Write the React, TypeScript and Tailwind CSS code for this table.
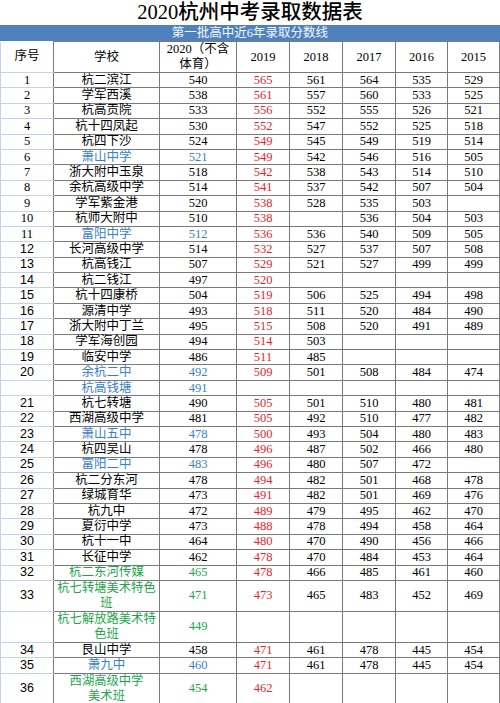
import React from "react";

type Tone = "black" | "blue" | "green";

interface Row {
    seq: string;
    name: string[];
    tone: Tone;
    scores: string[]; // 2020, 2019, 2018, 2017, 2016, 2015
}

const r = (
    seq: string,
    name: string | string[],
    tone: Tone,
    ...scores: string[]
): Row => ({
    seq,
    name: Array.isArray(name) ? name : [name],
    tone,
    scores: [...scores, "", "", "", "", "", ""].slice(0, 6),
});

const ROWS: Row[] = [
    r("1", "杭二滨江", "black", "540", "565", "561", "564", "535", "529"),
    r("2", "学军西溪", "black", "538", "561", "557", "560", "533", "525"),
    r("3", "杭高贡院", "black", "533", "556", "552", "555", "526", "521"),
    r("4", "杭十四凤起", "black", "530", "552", "547", "552", "525", "518"),
    r("5", "杭四下沙", "black", "524", "549", "545", "549", "519", "514"),
    r("6", "萧山中学", "blue", "521", "549", "542", "546", "516", "505"),
    r("7", "浙大附中玉泉", "black", "518", "542", "538", "543", "514", "510"),
    r("8", "余杭高级中学", "black", "514", "541", "537", "542", "507", "504"),
    r("9", "学军紫金港", "black", "520", "538", "528", "535", "503", ""),
    r("10", "杭师大附中", "black", "510", "538", "", "536", "504", "503"),
    r("11", "富阳中学", "blue", "512", "536", "536", "540", "509", "505"),
    r("12", "长河高级中学", "black", "514", "532", "527", "537", "507", "508"),
    r("13", "杭高钱江", "black", "507", "529", "521", "527", "499", "499"),
    r("14", "杭二钱江", "black", "497", "520"),
    r("15", "杭十四康桥", "black", "504", "519", "506", "525", "494", "498"),
    r("16", "源清中学", "black", "493", "518", "511", "520", "484", "490"),
    r("17", "浙大附中丁兰", "black", "495", "515", "508", "520", "491", "489"),
    r("18", "学军海创园", "black", "494", "514", "503"),
    r("19", "临安中学", "black", "486", "511", "485"),
    r("20", "余杭二中", "blue", "492", "509", "501", "508", "484", "474"),
    r("", "杭高钱塘", "blue", "491"),
    r("21", "杭七转塘", "black", "490", "505", "501", "510", "480", "481"),
    r("22", "西湖高级中学", "black", "481", "505", "492", "510", "477", "482"),
    r("23", "萧山五中", "blue", "478", "500", "493", "504", "480", "483"),
    r("24", "杭四吴山", "black", "478", "496", "487", "502", "466", "480"),
    r("25", "富阳二中", "blue", "483", "496", "480", "507", "472", ""),
    r("26", "杭二分东河", "black", "478", "494", "482", "501", "468", "478"),
    r("27", "绿城育华", "black", "473", "491", "482", "501", "469", "476"),
    r("28", "杭九中", "black", "472", "489", "479", "495", "462", "470"),
    r("29", "夏衍中学", "black", "473", "488", "478", "494", "458", "464"),
    r("30", "杭十一中", "black", "464", "480", "470", "490", "456", "466"),
    r("31", "长征中学", "black", "462", "478", "470", "484", "453", "464"),
    r("32", "杭二东河传媒", "green", "465", "478", "466", "485", "461", "460"),
    r("33", ["杭七转塘美术特色", "班"], "green", "471", "473", "465", "483", "452", "469"),
    r("", ["杭七解放路美术特", "色班"], "green", "449"),
    r("34", "艮山中学", "black", "458", "471", "461", "478", "445", "454"),
    r("35", "萧九中", "blue", "460", "471", "461", "478", "445", "454"),
    r("36", ["西湖高级中学", "美术班"], "green", "454", "462"),
];

const TONE: Record<Tone, string> = {
    black: "text-black",
    blue: "text-[#3b80c6]",
    green: "text-[#1ea54c]",
};

const serif = "font-['Liberation_Serif','Noto_Sans_CJK_SC',serif]";
const cell = "border border-[#7a7a7a] p-0 text-center align-middle";
const seqCell = "border border-[#c3d4ea] border-r-[#7a7a7a] p-0 text-center align-middle";

export default function App() {
    return (
        <div className={`w-[500px] h-[703px] bg-white overflow-hidden ${serif}`}>
            <div className="h-[25px] flex items-center justify-center text-[20.5px] font-medium leading-none text-black">
                2020杭州中考录取数据表
            </div>
            <div className="h-[16px] bg-[#4f81bd] flex items-center justify-center text-[12.5px] leading-none text-[#f4f7fb]">
                第一批高中近6年录取分数线
            </div>
            <table className="w-[499px] table-fixed border-collapse text-[12.5px] leading-[13px] text-black">
                <colgroup>
                    <col className="w-[53px]" />
                    <col className="w-[106px]" />
                    <col className="w-[77px]" />
                    <col className="w-[53px]" />
                    <col className="w-[53px]" />
                    <col className="w-[53px]" />
                    <col className="w-[52px]" />
                    <col className="w-[52px]" />
                </colgroup>
                <thead>
                    <tr className="h-[30px]">
                        <th className={`${seqCell} border-t-0 font-normal`}>序号</th>
                        <th className={`${cell} font-normal`}>学校</th>
                        <th className={`${cell} font-normal leading-[15px]`}>
                            2020（不含
                            <br />
                            体育）
                        </th>
                        {["2019", "2018", "2017", "2016", "2015"].map((y) => (
                            <th key={y} className={`${cell} font-normal`}>
                                {y}
                            </th>
                        ))}
                    </tr>
                </thead>
                <tbody>
                    {ROWS.map((row, i) => {
                        const tall = row.name.length > 1;
                        const seqFont =
                            Number(row.seq) >= 12
                                ? "font-['Liberation_Sans',sans-serif]"
                                : "";
                        return (
                            <tr key={i} className={tall ? "h-[31px]" : "h-[15.4px]"}>
                                <td className={`${seqCell} ${seqFont}`}>{row.seq}</td>
                                <td className={`${cell} ${TONE[row.tone]}`}>
                                    <div
                                        className={`flex flex-col items-center whitespace-nowrap ${
                                            tall ? "leading-[15px] text-[12.3px]" : ""
                                        }`}
                                    >
                                        {row.name.map((part, j) => (
                                            <span key={j}>{part}</span>
                                        ))}
                                    </div>
                                </td>
                                {row.scores.map((s, j) => (
                                    <td
                                        key={j}
                                        className={`${cell} ${
                                            j === 0
                                                ? TONE[row.tone]
                                                : j === 1
                                                  ? "text-[#e3262b]"
                                                  : "text-black"
                                        }`}
                                    >
                                        {s}
                                    </td>
                                ))}
                            </tr>
                        );
                    })}
                </tbody>
            </table>
        </div>
    );
}
